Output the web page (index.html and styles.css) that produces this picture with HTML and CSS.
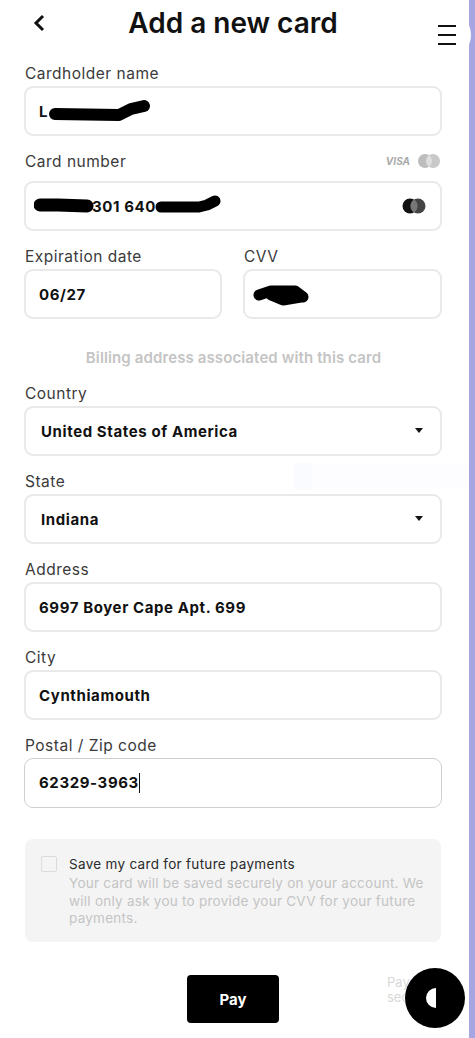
FILE: index.html
```html
<!DOCTYPE html>
<html lang="en">
<head>
<meta charset="utf-8">
<title>Add a new card</title>
<link rel="stylesheet" href="styles.css">
</head>
<body>
<div class="page">
  <header class="head">
    <svg class="back" width="16" height="20" viewBox="0 0 16 20"><path d="M12 3 L5 10 L12 17" fill="none" stroke="#111" stroke-width="3"/></svg>
    <h1>Add a new card</h1>
  </header>
  <form class="form">
    <div class="field">
      <label>Cardholder name</label>
      <div class="box"><span class="val">L</span>
        <svg class="scrib s1" width="102" height="26" viewBox="0 0 102 26"><path d="M6 15 L70 16 L82 10 L95 7" fill="none" stroke="#000" stroke-width="12" stroke-linecap="round" stroke-linejoin="round"/></svg>
      </div>
    </div>
    <div class="field">
      <div class="labelrow"><label>Card number</label>
        <span class="brands"><i class="visa">VISA</i><svg width="24" height="16" viewBox="0 0 24 16"><circle cx="8" cy="8" r="7" fill="#bdbdbd"/><circle cx="16" cy="8" r="7" fill="#c9c9c9"/><path d="M12 2.3a7 7 0 0 1 0 11.4a7 7 0 0 1 0-11.4z" fill="#dedede"/></svg></span>
      </div>
      <div class="box between"><span class="val num">301 640</span>
        <svg class="scrib s2l" width="60" height="16" viewBox="0 0 60 16"><path d="M6 7 L24 7 L53 8" fill="none" stroke="#000" stroke-width="13" stroke-linecap="round"/></svg>
        <svg class="scrib s2r" width="66" height="20" viewBox="0 0 66 20"><path d="M6 12 L44 12 L52 10 L60 6" fill="none" stroke="#000" stroke-width="11" stroke-linecap="round" stroke-linejoin="round"/></svg>
        <svg class="mc" width="24" height="16" viewBox="0 0 24 16"><circle cx="8" cy="8" r="7.5" fill="#111"/><circle cx="16" cy="8" r="7.5" fill="#444"/><path d="M12 1.6a7.5 7.5 0 0 1 0 12.8a7.5 7.5 0 0 1 0-12.8z" fill="#777"/></svg>
      </div>
    </div>
    <div class="pair">
      <div class="field"><label>Expiration date</label><div class="box"><span class="val">06/27</span></div></div>
      <div class="field"><label>CVV</label><div class="box">
        <svg class="scrib s3" width="58" height="24" viewBox="0 0 58 24"><path d="M6 12 L18 8 L42 8 L50 14 M18 12 L30 17 L48 14" fill="none" stroke="#000" stroke-width="11" stroke-linecap="round" stroke-linejoin="round"/></svg>
      </div></div>
    </div>
    <p class="billing">Billing address associated with this card</p>
    <div class="field"><label>Country</label><div class="box between sel"><span class="val">United States of America</span><b class="caret"></b></div></div>
    <div class="field"><label>State</label><div class="box between sel"><span class="val">Indiana</span><b class="caret"></b></div></div>
    <div class="field"><label>Address</label><div class="box"><span class="val">6997 Boyer Cape Apt. 699</span></div></div>
    <div class="field"><label>City</label><div class="box"><span class="val">Cynthiamouth</span></div></div>
    <div class="field"><label>Postal / Zip code</label><div class="box focus"><span class="val caretline">62329-3963</span></div></div>
    <div class="save">
      <span class="check"></span>
      <div class="savetext">
        <p class="savetitle">Save my card for future payments</p>
        <p class="savenote">Your card will be saved securely on your account. We will only ask you to provide your CVV for your future payments.</p>
      </div>
    </div>
    <div class="actions">
      <button type="button" class="pay">Pay</button>
      <p class="secure">Pay<br>sec</p>
    </div>
  </form>
  <div class="ghost"><span></span></div>
  <aside class="rail"></aside>
  <div class="menuwrap"><svg width="20" height="20" viewBox="0 0 20 20"><path d="M1 1h18M1 10h18M1 19h18" stroke="#111" stroke-width="1.8"/></svg></div>
  <div class="fab"><svg width="10" height="20" viewBox="0 0 10 20"><path d="M10 0a10 10 0 0 0 0 20z" fill="#fff"/></svg></div>
</div>
</body>
</html>
```
FILE: styles.css
```css
* { box-sizing: border-box; }
html, body { margin: 0; padding: 0; background: #fff; }
body { font-family: Inter, "Liberation Sans", sans-serif; color: #111; overflow: hidden; }
.page { position: relative; width: 475px; height: 1038px; overflow: hidden; }
p { margin: 0; }

.head { height: 65px; position: relative; display: flex; justify-content: center; padding: 5px 9px 0 0; }
.head h1 { margin: 0; font-size: 28px; line-height: 36px; font-weight: 600; color: #111; }
.back { position: absolute; left: 31px; top: 13px; }
.menuwrap { position: absolute; left: 423px; top: 11px; width: 48px; height: 48px; border-radius: 50%; background: #fff; display: flex; align-items: center; justify-content: center; }

.form { display: flex; flex-direction: column; padding: 0 33px 0 24px; }
.field { display: flex; flex-direction: column; min-width: 0; }
.form > .field + .field { margin-top: 17px; }
label { display: block; height: 21px; padding-left: 1px; font-size: 15.5px; line-height: 17px; color: #3a3a3a; letter-spacing: .5px; }
.labelrow { display: flex; justify-content: space-between; align-items: center; height: 30px; padding-bottom: 10px; }
.labelrow label { height: auto; }
.form > .field:first-child + .field { margin-top: 15px; }

.box { position: relative; height: 50px; display: flex; align-items: center; padding: 0 13px; background: #fff; border: 2px solid #e9e9e9; border-radius: 9px; }
.between { justify-content: space-between; }
.sel { padding-left: 15px; padding-right: 17px; }
.focus { border: 1px solid #cfcfcf; padding-left: 14px; }
.val { font-size: 15px; font-weight: 700; color: #111; white-space: nowrap; letter-spacing: .6px; }
.caretline { border-right: 1px solid #111; line-height: 20px; }

.brands { display: flex; align-items: center; gap: 7px; padding-right: 1px; }
.visa { font-size: 10px; font-weight: 700; color: #aaa; font-style: italic; }
.scrib { position: absolute; }
.s1 { left: 23px; top: 11px; }
.s2l { left: 8px; top: 15px; }
.s2r { left: 129px; top: 12px; }
.s3 { left: 8px; top: 12px; }
.num { margin-left: 53px; }
.mc { margin-right: 1px; }

.pair { display: grid; grid-template-columns: 198px 199px; gap: 21px; margin-top: 17px; }
.billing { margin: 29px 0 17px; height: 20px; text-align: center; font-size: 15px; line-height: 20px; font-weight: 600; letter-spacing: .12px; color: #c4c4c4; padding-left: 1px; }
.caret { width: 0; height: 0; border-left: 4.5px solid transparent; border-right: 4.5px solid transparent; border-top: 5px solid #111; margin-top: -2px; }

.save { display: flex; gap: 12px; margin: 31px 0 0 1px; width: 416px; height: 103px; padding: 17px 16px; background: #f4f4f4; border-radius: 8px; }
.check { flex: none; width: 16px; height: 16px; border: 1px solid #dcdcdc; background: #f4f4f4; border-radius: 2px; }
.savetext { min-width: 0; }
.savetitle { font-size: 13.5px; line-height: 17px; color: #2a2a2a; letter-spacing: .3px; }
.savenote { font-size: 13.5px; line-height: 17.5px; color: #c4c4c4; margin-top: 2px; letter-spacing: .25px; }

.actions { position: relative; margin-top: 33px; display: flex; justify-content: center; }
.pay { width: 92px; height: 48px; border: 0; border-radius: 4px; background: #000; color: #fff; font: 700 15px Inter, "Liberation Sans", sans-serif; }
.secure { position: absolute; left: 363px; top: 0; font-size: 13px; line-height: 15px; color: #d8d8d8; }

.ghost { position: absolute; left: 294px; top: 463px; width: 175px; height: 26px; background: #fdfdff; }
.ghost span { display: block; width: 18px; height: 26px; background: #fafbfe; }
.rail { position: absolute; left: 469px; top: 0; width: 6px; height: 1038px; background: #a6a6e2; }
.fab { position: absolute; left: 405px; top: 968px; width: 60px; height: 60px; border-radius: 50%; background: #000; display: flex; align-items: center; justify-content: center; }
.fab svg { margin-left: -9px; }
```
